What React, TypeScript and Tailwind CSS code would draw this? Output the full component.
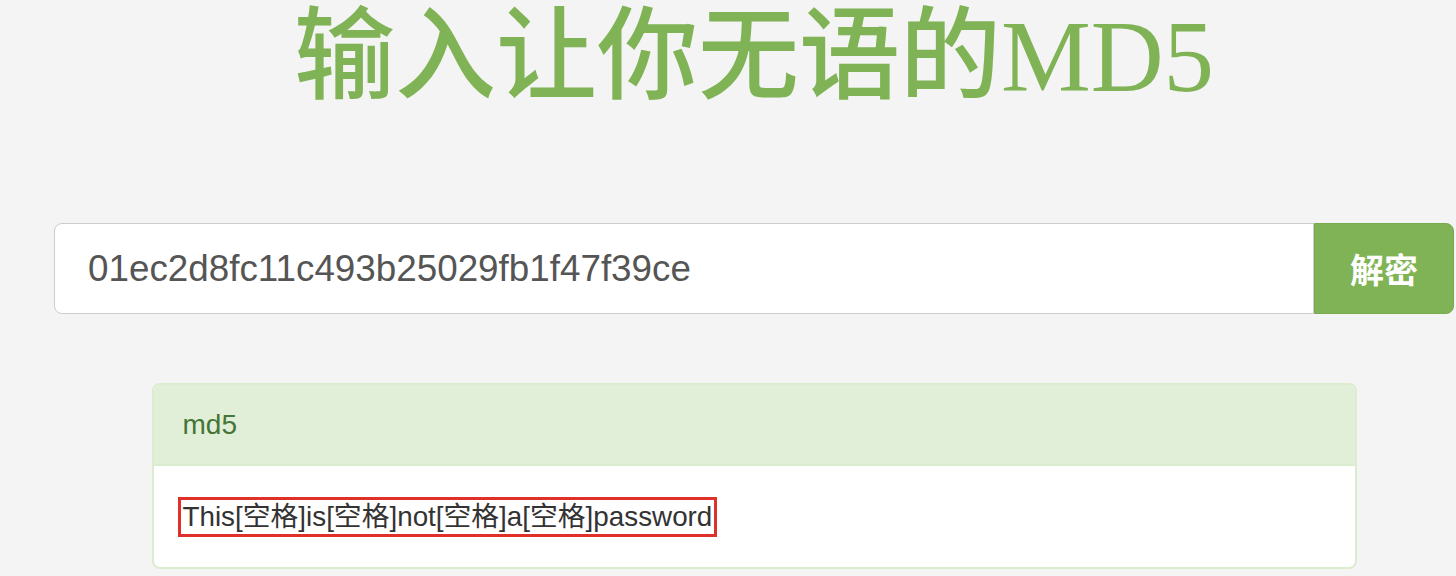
import React from "react";

export default function App() {
  return (
    <div className="w-[1456px] h-[576px] overflow-hidden bg-[#f4f4f4]">
      <div className="ml-[54px] w-[1400px]">
        <div className="h-[223px] pt-[2px]">
          <h1
            className="text-center text-[#80b355] text-[101px] leading-[110px] font-medium"
            style={{ fontFamily: '"Liberation Serif", "Noto Sans CJK SC", serif' }}
          >
            输入让你无语的MD5
          </h1>
        </div>
        <div className="flex h-[91px]">
          <div
            className="flex-1 flex items-center bg-white border border-[#cccccc] rounded-l-[8px] pl-[33px] text-[36.8px] text-[#555555]"
            style={{ fontFamily: '"Liberation Sans", Arial, sans-serif' }}
          >
            01ec2d8fc11c493b25029fb1f47f39ce
          </div>
          <div
            className="w-[140px] flex items-center justify-center bg-[#80b355] border border-[#78aa4e] rounded-r-[8px] text-white text-[34px] font-bold"
            style={{ fontFamily: '"Noto Sans CJK SC", sans-serif' }}
          >
            解密
          </div>
        </div>
        <div
          className="mt-[69px] mx-auto w-[1205px] border-2 border-[#dbeccf] rounded-[8px] bg-white overflow-hidden"
          style={{ fontFamily: '"Liberation Sans", Arial, "Noto Sans CJK SC", sans-serif' }}
        >
          <div className="h-[81px] bg-[#e2efd8] border-b-2 border-[#dbeccf] flex items-center pl-[29px] text-[28px] text-[#457537]">
            md5
          </div>
          <div className="h-[101px] flex items-center pl-[24px]">
            <span className="border-[3px] border-[#e0302a] px-[2px] text-[27.8px] leading-[34px] text-[#333333]">
              This[空格]is[空格]not[空格]a[空格]password
            </span>
          </div>
        </div>
      </div>
    </div>
  );
}
